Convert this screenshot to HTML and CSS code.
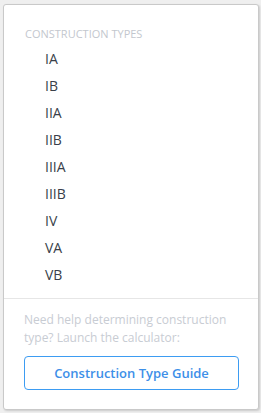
FILE: index.html
```html
<!DOCTYPE html>
<html lang="en">

<head>
    <meta charset="UTF-8">
    <meta name="viewport" content="width=device-width, initial-scale=1.0">
    <title>Construction Types</title>
    <link rel="stylesheet" href="styles.css">
</head>

<body>
    <div class="dropdown">
        <div class="list">
            <div class="title">Construction Types</div>
            <ul>
                <li>IA</li>
                <li>IB</li>
                <li>IIA</li>
                <li>IIB</li>
                <li>IIIA</li>
                <li>IIIB</li>
                <li>IV</li>
                <li>VA</li>
                <li>VB</li>
            </ul>
        </div>
        <div class="help">
            <p>Need help determining construction type? Launch the calculator:</p>
            <button class="guide">Construction Type Guide</button>
        </div>
    </div>
</body>

</html>
```

FILE: styles.css
```css
* {
    margin: 0;
    padding: 0;
    box-sizing: border-box;
}

body {
    background: #efefef;
    padding: 4px 3px;
    font-family: "Open Sans", "Liberation Sans", sans-serif;
}

.dropdown {
    width: 256px;
    height: 406px;
    background: #fff;
    border: 1px solid #c9c9c9;
    border-radius: 3px;
    box-shadow: 1px 1px 2px rgba(0, 0, 0, 0.15);
}

.list {
    padding: 22px 0 10px 21px;
    border-bottom: 1px solid #e6e6e6;
}

.title {
    font-size: 11px;
    text-transform: uppercase;
    color: #c3c7ce;
    line-height: 14px;
    margin-bottom: 4px;
}

.list ul {
    list-style: none;
}

.list li {
    padding-left: 20px;
    font-size: 14px;
    line-height: 27px;
    color: #3a3f4a;
}

.help {
    padding: 12px 20px 0 20px;
}

.help p {
    font-size: 12px;
    line-height: 18px;
    color: #c8ccd3;
    margin-bottom: 9px;
}

.guide {
    display: block;
    width: 215px;
    height: 34px;
    background: #fff;
    border: 1px solid #3d9cf2;
    border-radius: 4px;
    color: #3d8fe8;
    font-family: "Open Sans", "Liberation Sans", sans-serif;
    font-size: 13px;
    font-weight: 600;
}
```
